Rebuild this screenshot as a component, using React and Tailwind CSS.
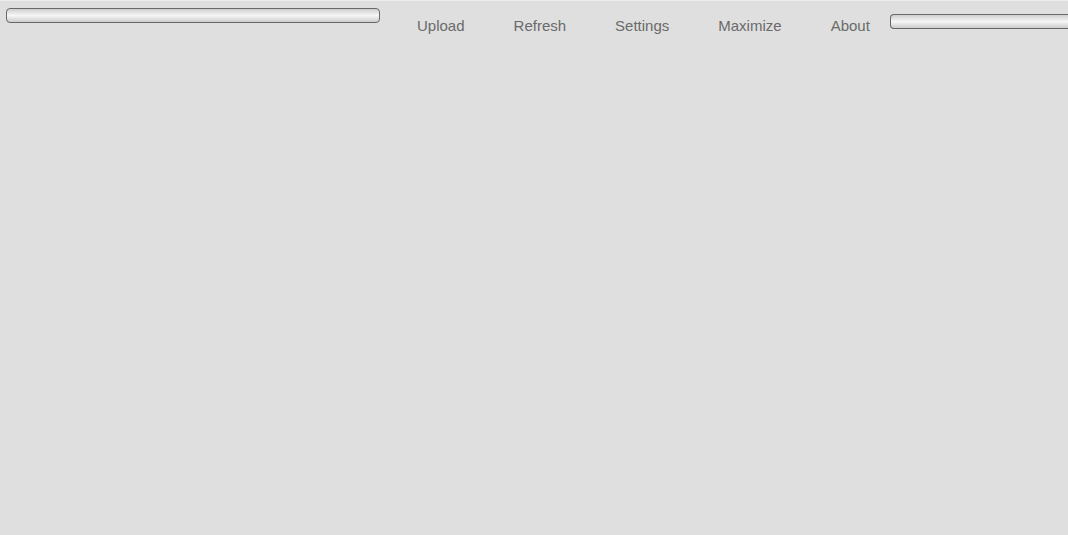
export default function App() {
  const items = ["Upload", "Refresh", "Settings", "Maximize", "About"];
  return (
    <div className="w-[1068px] h-[535px] overflow-hidden bg-[#dfdfdf] border-t border-[#ececec] font-['Liberation_Sans',Arial,sans-serif]">
      <div className="flex items-start">
        <div className="ml-[6px] mt-[7px] w-[374px] h-[15px] shrink-0 rounded-[4px] border border-[#686868] bg-gradient-to-b from-[#cfcfcf] via-[#f6f6f6] to-[#cdcdcd]" />
        <nav className="flex ml-[37px] mt-[16px] gap-[49px] text-[15px] leading-[18px] text-[#6a6a6a]">
          {items.map((t) => (
            <a key={t} href="#" className="block">{t}</a>
          ))}
        </nav>
        <div className="ml-[20px] mt-[13px] flex-1 h-[15px] rounded-l-[4px] border border-r-0 border-[#686868] bg-gradient-to-b from-[#cfcfcf] via-[#f6f6f6] to-[#cdcdcd]" />
      </div>
    </div>
  );
}
